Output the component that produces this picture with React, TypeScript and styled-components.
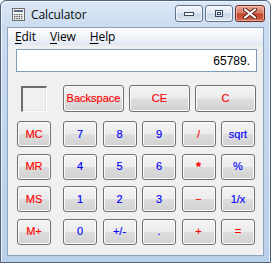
import React from "react";
import styled, { createGlobalStyle } from "styled-components";

const Global = createGlobalStyle`
  html, body { margin: 0; padding: 0; background: #ffffff; }
  * { box-sizing: border-box; }
`;

const Window = styled.div`
  width: 271px;
  height: 263px;
  border: 1px solid #4f627a;
  border-radius: 6px 6px 0 0;
  background: linear-gradient(to bottom, #dbe7f5 0px, #c9dbef 30px, #b9d0ea 100%);
  display: flex;
  flex-direction: column;
  padding: 0 6px 6px 6px;
  box-shadow: inset 1px 1px 0 #eef4fb, inset -1px 0 0 #e3ecf7;
`;

const TitleBar = styled.div`
  height: 26px;
  display: flex;
  align-items: center;
  padding-left: 5px;
`;

const TitleText = styled.span`
  font-family: "Open Sans", "Noto Sans", sans-serif;
  font-size: 12px;
  color: #0b0b0b;
  margin-left: 6px;
  letter-spacing: -0.1px;
`;

const CaptionGroup = styled.div`
  margin-left: auto;
  display: flex;
  gap: 2px;
  align-items: center;
  margin-top: -1px;
  margin-right: -1px;
`;

const CaptionButton = styled.div<{ $close?: boolean }>`
  width: ${(p) => (p.$close ? 30 : 28)}px;
  height: 17px;
  border: 1px solid ${(p) => (p.$close ? "#6a2b20" : "#61738b")};
  border-radius: 3px;
  display: flex;
  align-items: center;
  justify-content: center;
  background: ${(p) =>
    p.$close
      ? "linear-gradient(to bottom, #e8a795 0%, #d47e68 45%, #c2442b 55%, #d06b4f 100%)"
      : "linear-gradient(to bottom, #f2f6fb 0%, #dfe8f3 45%, #cbd8e8 55%, #dbe5f1 100%)"};
  box-shadow: inset 0 0 0 1px ${(p) => (p.$close ? "rgba(255,210,200,0.6)" : "rgba(255,255,255,0.7)")};
`;

const Client = styled.div`
  flex: 1;
  border: 1px solid #8ea3bd;
  display: flex;
  flex-direction: column;
  background: #f0f0f0;
`;

const MenuBar = styled.div`
  height: 18px;
  display: flex;
  align-items: center;
  background: linear-gradient(to bottom, #fbfcfe 0%, #eef2f8 60%, #e2e9f3 100%);
  border-bottom: 1px solid #e6ebf2;
`;

const MenuItem = styled.span`
  font-family: "Open Sans", "Noto Sans", sans-serif;
  font-size: 12px;
  color: #000;
  padding: 0 7px;
  letter-spacing: -0.1px;
  u { text-decoration: underline; text-underline-offset: 2px; }
`;

const Body = styled.div`
  flex: 1;
  padding: 3px 6px 0 8px;
  display: flex;
  flex-direction: column;
`;

const Display = styled.div`
  height: 23px;
  border: 1px solid #7f9db9;
  background: #ffffff;
  display: flex;
  align-items: center;
  justify-content: flex-end;
  padding-right: 6px;
  font-family: "Liberation Sans", Arial, sans-serif;
  font-size: 12px;
  color: #000;
`;

const TopRow = styled.div`
  margin-top: 13px;
  display: flex;
  align-items: center;
  padding-left: 1px;
  height: 27px;
`;

const MemoryCell = styled.div`
  width: 34px;
  display: flex;
  justify-content: center;
  margin-right: 12px;
`;

const MemoryBox = styled.div`
  width: 26px;
  height: 26px;
  border-top: 2px solid #6e6e6e;
  border-left: 2px solid #6e6e6e;
  border-right: 1px solid #ffffff;
  border-bottom: 1px solid #ffffff;
  box-shadow: inset -1px -1px 0 #e3e3e3;
  background: #f0f0f0;
`;

const WideRow = styled.div`
  display: flex;
  gap: 5px;
`;

const Key = styled.button<{ $color: string; $w: number; $h: number; $big?: boolean }>`
  width: ${(p) => p.$w}px;
  height: ${(p) => p.$h}px;
  padding: 0;
  margin: 0;
  border: 1px solid #707070;
  border-radius: 3px;
  background: linear-gradient(to bottom, #f3f3f3 0%, #ececec 48%, #dddddd 52%, #d1d1d1 100%);
  box-shadow: inset 0 0 0 1px #fbfbfb;
  font-family: "Liberation Sans", Arial, sans-serif;
  font-size: ${(p) => (p.$big ? 13 : 11)}px;
  font-weight: ${(p) => (p.$big ? 700 : 400)};
  -webkit-text-stroke: 0.15px ${(p) => p.$color};
  color: ${(p) => p.$color};
  display: flex;
  align-items: center;
  justify-content: center;
  line-height: 1;
`;

const MemCol = styled.div`
  width: 34px;
`;

const RED = "#ff0000";
const BLUE = "#0000ff";

type K = [string, string];

const rows: K[][] = [
  [["MC", RED], ["7", BLUE], ["8", BLUE], ["9", BLUE], ["/", RED], ["sqrt", BLUE]],
  [["MR", RED], ["4", BLUE], ["5", BLUE], ["6", BLUE], ["*", RED], ["%", BLUE]],
  [["MS", RED], ["1", BLUE], ["2", BLUE], ["3", BLUE], ["\u2212", RED], ["1/x", BLUE]],
  [["M+", RED], ["0", BLUE], ["+/-", BLUE], [".", BLUE], ["+", RED], ["=", RED]],
];

const KeyRow = styled.div`
  display: flex;
  height: 26px;
`;

const DigitGroup = styled.div`
  display: grid;
  grid-template-columns: repeat(5, 34px);
  column-gap: 5.5px;
  margin-left: 12px;
`;

const Rows = styled.div`
  margin-top: 9px;
  padding-left: 1px;
  display: flex;
  flex-direction: column;
  gap: 6.5px;
`;

const CalcIcon = () => (
  <svg width="13" height="13" viewBox="0 0 13 13">
    <rect x="0.5" y="0.5" width="12" height="12" fill="#f4f4f4" stroke="#6b6b6b" />
    <rect x="2" y="2" width="9" height="2" fill="#5a6a80" />
    {[0, 1, 2, 3].map((c) =>
      [0, 1, 2].map((r) => (
        <rect key={`${c}-${r}`} x={2 + c * 2.3} y={6 + r * 2} width="1.4" height="1.2" fill="#555" />
      ))
    )}
  </svg>
);

const MinGlyph = () => (
  <svg width="12" height="6" viewBox="0 0 12 6">
    <rect x="1.5" y="1.5" width="9" height="3" fill="#ffffff" stroke="#3b4a5e" />
  </svg>
);

const MaxGlyph = () => (
  <svg width="10" height="9" viewBox="0 0 10 9">
    <rect x="1.5" y="1.5" width="7" height="6" fill="none" stroke="#3b4a5e" />
    <rect x="3.5" y="3.5" width="3" height="2" fill="#ffffff" stroke="#3b4a5e" strokeWidth="1" />
  </svg>
);

const CloseGlyph = () => (
  <svg width="14" height="11" viewBox="0 0 14 11">
    <path d="M2 1.5 L12 9.5 M12 1.5 L2 9.5" stroke="#5a1f14" strokeWidth="4" strokeLinecap="round" />
    <path d="M2 1.5 L12 9.5 M12 1.5 L2 9.5" stroke="#ffffff" strokeWidth="2.2" strokeLinecap="round" />
  </svg>
);

export default function App() {
  return (
    <>
      <Global />
      <Window>
        <TitleBar>
          <CalcIcon />
          <TitleText>Calculator</TitleText>
          <CaptionGroup>
            <CaptionButton>
              <MinGlyph />
            </CaptionButton>
            <CaptionButton>
              <MaxGlyph />
            </CaptionButton>
            <CaptionButton $close>
              <CloseGlyph />
            </CaptionButton>
          </CaptionGroup>
        </TitleBar>
        <Client>
          <MenuBar>
            <MenuItem>
              <u>E</u>dit
            </MenuItem>
            <MenuItem>
              <u>V</u>iew
            </MenuItem>
            <MenuItem>
              <u>H</u>elp
            </MenuItem>
          </MenuBar>
          <Body>
            <Display>65789.</Display>
            <TopRow>
              <MemoryCell>
                <MemoryBox />
              </MemoryCell>
              <WideRow>
                <Key $color={RED} $w={61} $h={27}>Backspace</Key>
                <Key $color={RED} $w={61} $h={27}>CE</Key>
                <Key $color={RED} $w={61} $h={27}>C</Key>
              </WideRow>
            </TopRow>
            <Rows>
              {rows.map((row, i) => (
                <KeyRow key={i}>
                  <MemCol>
                    <Key $color={row[0][1]} $w={34} $h={26}>{row[0][0]}</Key>
                  </MemCol>
                  <DigitGroup>
                    {row.slice(1).map(([label, color]) => (
                      <Key key={label} $color={color} $w={34} $h={26} $big={label === "*"}>
                        {label}
                      </Key>
                    ))}
                  </DigitGroup>
                </KeyRow>
              ))}
            </Rows>
          </Body>
        </Client>
      </Window>
    </>
  );
}
